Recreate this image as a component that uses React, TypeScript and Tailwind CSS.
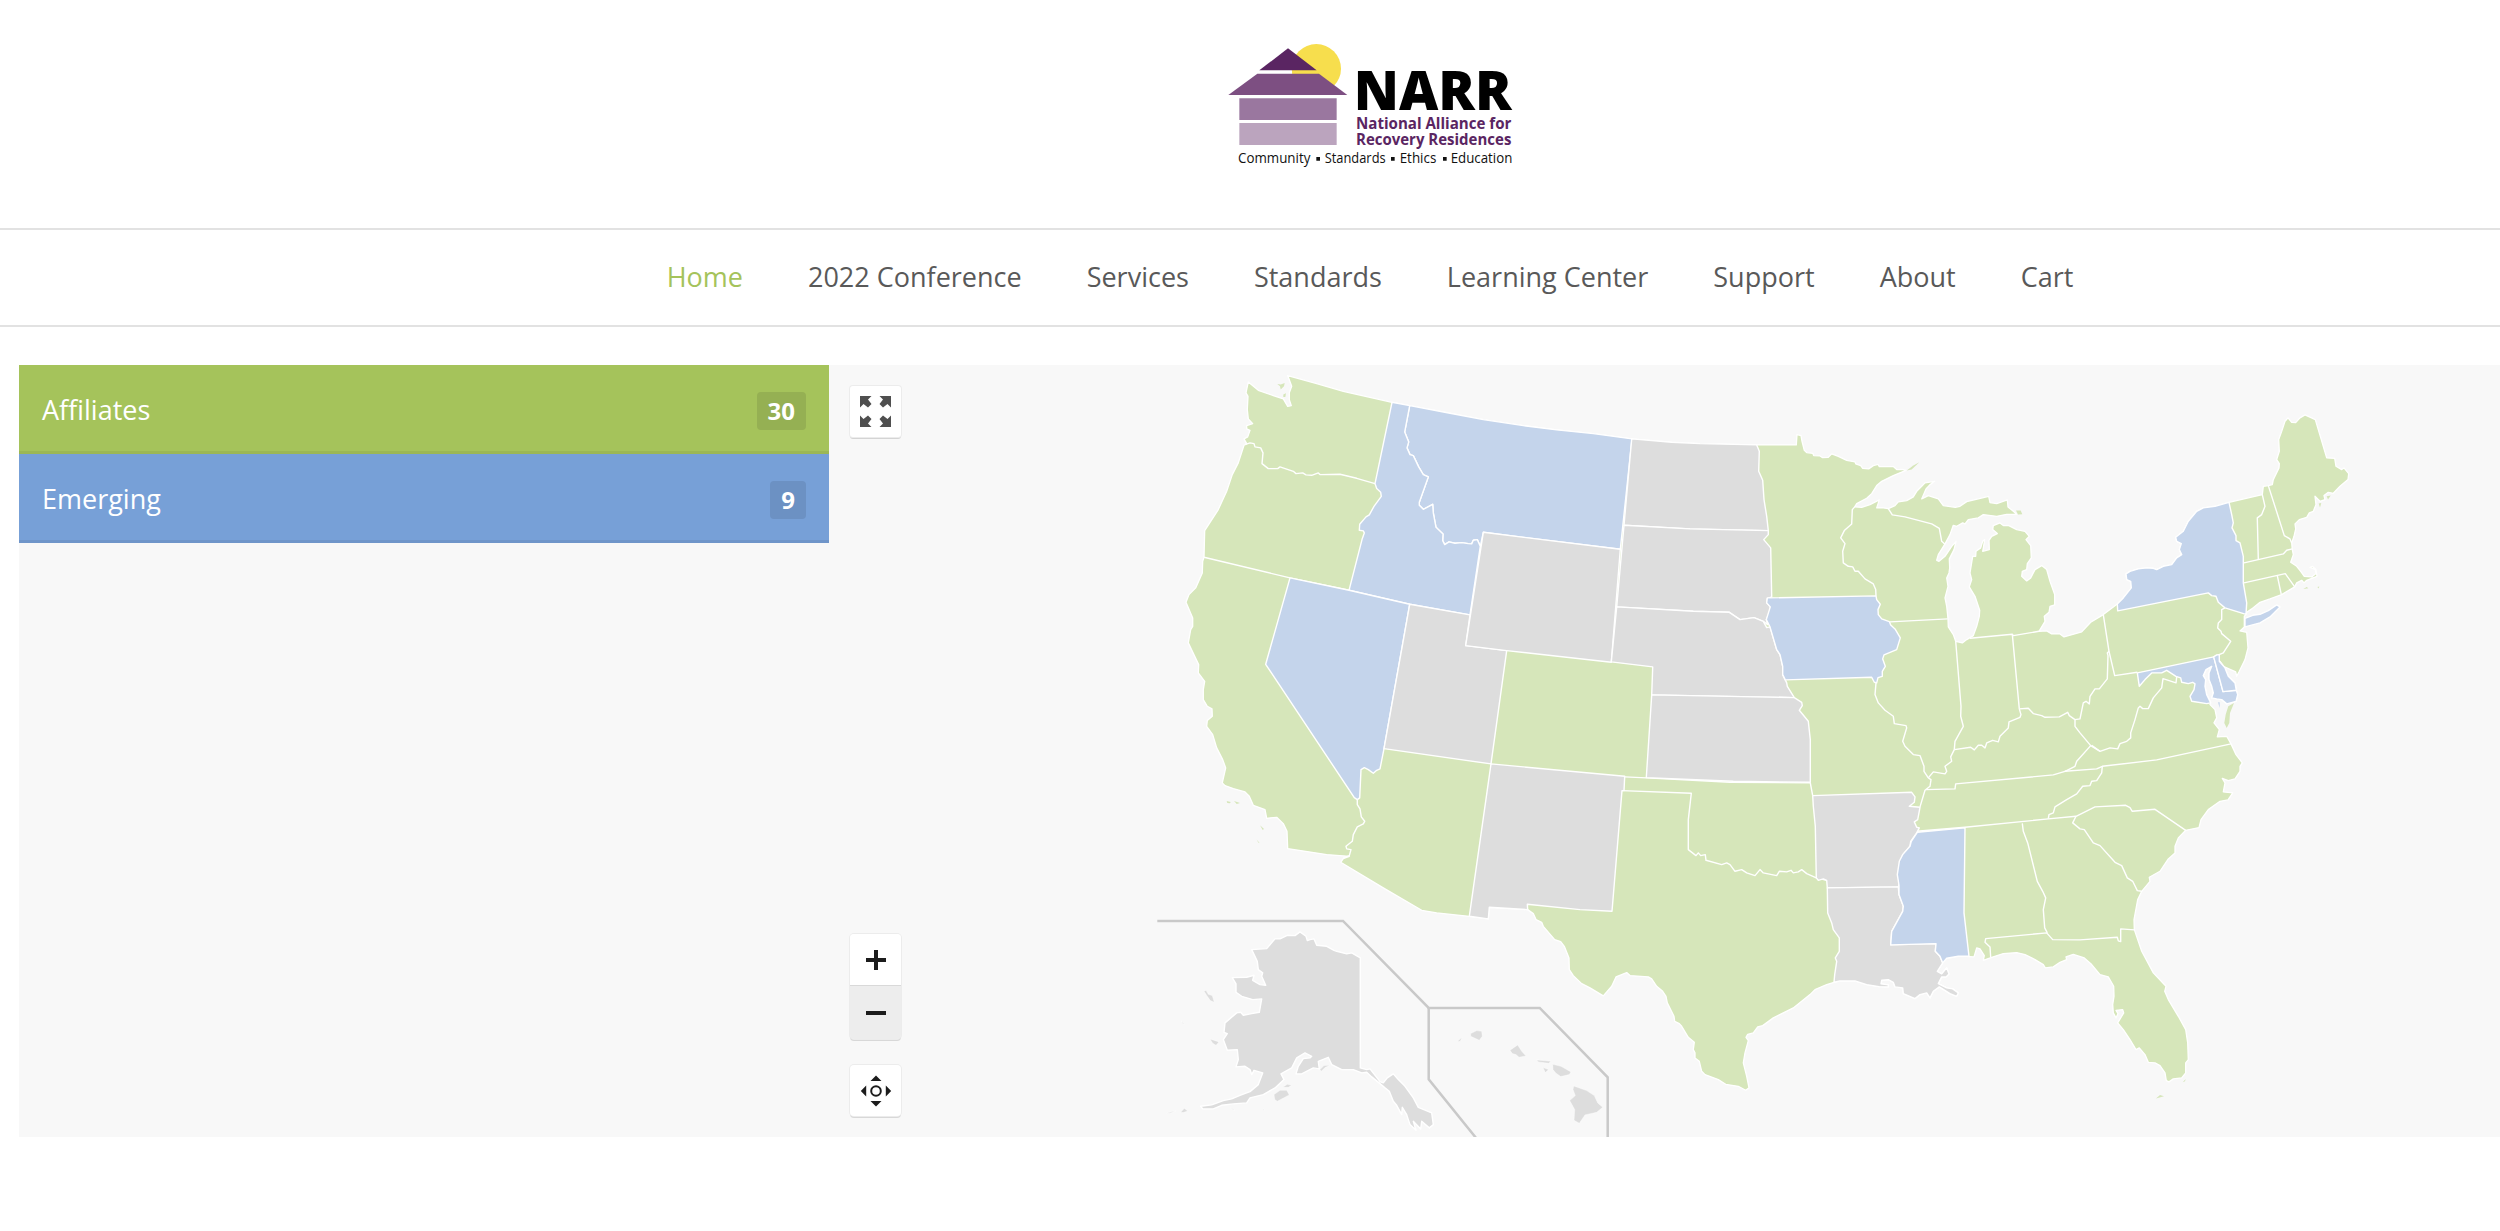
import React from "react";

const GREEN = "#d6e6ba";
const BLUE = "#c4d4eb";
const GRAY = "#dddddd";

/* Map sheets: each one has its own origin in map pixels and three units per pixel. */
const SHEETS = {
  nw: [1131, -5.4],
  mid: [1581, 54.6],
  lakes: [1801, 54.6],
  ne: [2041, 24.6],
  sw: [1131, 374.6],
  south: [1561, 374.6],
  se: [1881, 334.6],
} as const;
type Sheet = keyof typeof SHEETS;
type Run = [Sheet, string];

const place = (sheet: Sheet, pts: string) =>
  pts
    .trim()
    .split(/\s+/)
    .map((p) => {
      const [x, y] = p.split(",").map(Number);
      return `${(SHEETS[sheet][0] + x / 3).toFixed(1)},${(SHEETS[sheet][1] + y / 3).toFixed(1)}`;
    })
    .join(" ");

const join = (runs: Run[]) => runs.map(([s, p]) => place(s, p)).join(" ");

const NORTH_MT = "779,138 900,161 1000,180 1120,198 1220,211 1330,222 1446,238";
const ID_MT =
  "779,138 764,217 776,247 771,265 780,285 790,288 806,322 820,345 835,352 808,428 808,437 820,449 848,434 850,460 858,503 879,523 878,543 884,555 897,547 915,551 935,549 955,552 965,553 970,542 982,540 991,560";
const NY_COAST =
  "172,643 190,625 214,595 212,575 200,570 198,553 210,545 235,538 260,535 280,536 290,540 310,530 335,525 350,505 365,495 358,480 364,462 350,455 347,443 370,425 385,395 410,365 430,355 465,350 507,338";
const CHESAPEAKE =
  "533,915 528,935 500,943 485,930 470,928 455,925 460,910 455,890 447,870 447,850 455,830 438,840 430,858 437,870 435,890 440,915 452,940";
const LA_COAST =
  "1088,670 1072,695 1085,703 1100,685 1107,703 1098,712 1085,712 1075,732 1100,745 1118,748 1135,760 1130,770 1110,762 1078,742 1060,755 1050,775 1040,760 1020,765 1005,777 970,762 968,745 945,742 940,728 925,720 905,722 903,733 925,736 925,742 897,741 860,735 825,724 780,724 762,728";

const LOWER_48: Run[] = [
  ["nw", "726,128 " + NORTH_MT],
  [
    "mid",
    "95,58 215,68 300,72 470,76 589,76 591,45 603,48 606,65 613,92 620,99 638,101 641,108 660,109 667,114 685,113 695,103 715,110 740,122 765,127 767,133 782,138 788,146 806,148 820,138 834,134 838,141 880,141 890,150 908,149 918,152 880,168 845,185 830,198 815,222 800,236 770,252 764,262 785,263 810,255 838,241 830,265 850,265 865,267 885,258 895,247 920,243 940,232 950,215 965,200 975,190 1004,185 990,195 978,208 965,238 985,228 1015,238 1030,258 1066,263",
  ],
  [
    "lakes",
    "406,263 420,260 440,246 506,230 510,249 530,252 562,241 564,262 580,275 590,284 560,284 530,290 490,285 475,295 445,300 435,313 428,310 410,320 400,317 390,345 375,373 355,405 350,422 357,425 375,410 395,380 408,365 402,390 388,418 389,445 387,460 380,475 384,500 375,535 380,560 384,598 385,622 400,645 407,665 427,670 440,660 460,648 470,620 478,590 479,572 465,530 448,502 455,480 450,460 458,410 467,410 468,395 482,385 488,365 494,360 488,395 508,390 507,362 515,350 532,342 518,330 520,318 540,310 550,318 565,317 590,330 615,335 628,350 618,360 632,378 634,415 622,432 620,450 607,455 605,470 620,484 632,475 645,450 665,438 680,450 690,485 704,525 704,556 690,560 687,578 673,590 675,605 657,635 680,634 695,643 720,643 732,652 785,637 812,608 850,585 892,553",
  ],
  [
    "ne",
    NY_COAST +
      " 607,315 610,290 625,288 637,285 640,270 657,235 658,222 650,210 658,185 656,150 665,125 675,95 684,85 695,98 707,99 720,85 735,76 766,90 800,205 824,206 828,230 845,240 852,235 866,252 864,270 840,290 820,311 805,308 792,318 795,330 780,335 765,320 768,345 760,365 748,370 740,383 718,390 705,403 707,418 702,440 695,460 697,480 700,495 692,518 710,530 722,545 733,560 755,562 768,552 766,540 750,533 757,530 768,540 771,560 740,572 732,580 725,572 710,580 704,592 665,615 630,628 600,638 575,658 560,668 558,675 553,680 553,712 540,724 560,728 564,775 555,810 538,845 530,860 527,847 490,830 480,815 495,835 505,860 525,880 529,900 " +
      CHESAPEAKE +
      " 450,945 465,960 470,985 462,1000 478,1020 472,1042 500,1040",
  ],
  [
    "se",
    "993,133 1008,165 1027,190 1020,200 1020,215 1005,238 985,243 967,236 975,250 970,277 998,280 984,301 960,305 925,330 903,360 897,384 857,392 835,415 825,440 825,460 805,478 780,515 748,533 750,545 725,575 713,600 702,660 703,690 725,755 760,820 798,860 794,875 805,900 835,950 857,990 863,1030 865,1080 857,1090 857,1120 845,1135 820,1138 807,1147 799,1143 795,1120 780,1098 765,1090 745,1088 735,1065 718,1045 708,1050 690,1020 670,990 653,970 671,940 668,930 648,932 654,942 648,955 640,940 638,915 642,890 641,860 625,832 600,825 575,795 553,775 520,764 498,772 500,780 480,788 460,802 436,805 430,795 405,780 375,765 350,759 310,762 275,773 250,782 253,768 240,748 230,745 222,772 208,771 175,769 150,775 138,772",
  ],
  [
    "south",
    LA_COAST +
      " 740,735 705,750 690,765 640,805 580,835 548,858 533,862 520,880 503,884 498,893 505,903 495,940 490,970 500,1010 507,1045 497,1052 475,1040 437,1034 415,1020 375,1005 365,995 358,965 345,955 345,940 340,930 343,908 325,893 305,860 298,852 284,845 282,830 262,790 258,770 248,755 230,740 215,718 205,712 150,708 140,699 108,712 95,740 70,769",
  ],
  [
    "sw",
    "1320,745 1295,732 1270,708 1258,690 1257,655 1243,620 1232,606 1214,600 1180,560 1175,548 1158,540 1150,522 1133,510 1018,503 1015,538 958,530 860,520 815,512 700,445 572,368 580,357 598,350 530,345 413,327 411,275 400,252 380,233 350,236 345,210 310,197 298,170 285,157 250,147 225,138 217,130",
  ],
  [
    "nw",
    "227,1225 218,1200 200,1165 188,1125 170,1100 172,1083 187,1070 186,1048 172,1040 160,1020 160,990 164,965 145,940 146,915 115,850 122,810 128,800 128,775 108,728 117,705 137,685 157,640 158,605 162,593 164,513 205,450 230,395 247,345 265,310 282,257 290,252 282,238 293,232 300,212 290,208 290,198 308,192 295,178 292,150 294,110 288,100 295,67 325,92 370,108 400,118 413,140 424,138 418,120 418,100 425,80 413,48 500,72 580,95",
  ],
];

/* Small green pieces lying off the coast. */
const GREEN_ISLES: Run[] = [
  ["nw", "382,73 392,75 404,70 402,80 392,90 390,80"],
  ["nw", "400,105 408,101 406,112 400,112"],
  ["mid", "920,153 935,150 958,128 940,138"],
  ["lakes", "588,273 602,273 607,284 594,285"],
  ["ne", "522,940 505,950 497,975 493,1000 500,1015 508,1000 510,970"],
  ["ne", "730,598 740,592 745,596"],
  ["ne", "772,592 778,591 776,597"],
  ["ne", "776,342 784,340 780,354"],
  ["ne", "800,320 812,318 804,330"],
  ["sw", "230,184 242,187 240,191 232,190"],
  ["sw", "252,184 270,190 260,193"],
  ["sw", "330,257 342,268 338,271"],
  ["sw", "320,300 329,311 325,309"],
  ["se", "768,1197 780,1186 792,1190"],
  ["se", "848,1148 857,1138 855,1145"],
];

/* Borders between neighbouring green states. */
const BORDERS: Run[] = [
  ["nw", "285,255 300,250 312,252 315,262 332,265 339,280 336,312 355,327 383,327 390,322 430,335 438,342 458,340 468,346 485,347 505,340 510,345 570,344 620,356 675,372"],
  ["nw", "162,593 420,655 597,692"],
  ["sw", "622,180 622,195 630,208 634,232 644,245 640,253 622,262 610,285 607,305 588,320 590,328 603,330 598,348 580,355"],
  ["south", "134,112 199,115 450,128 691,130 698,168"],
  ["south", "126,153 334,161 325,240 325,330 348,348 355,340 362,348 376,345 378,362 425,375 440,370 450,375 465,395 485,390 500,400 525,408 540,390 550,400 590,408 598,395 620,397 633,392 640,400 655,397 665,390 680,402 709,415 740,422"],
  ["mid", "764,262 757,270 755,313 733,333 722,355 735,372 728,395 730,430 745,440 758,442 765,455 775,455 795,478 820,493 827,510 828,529"],
  ["mid", "865,267 877,286 915,292 995,313 1018,326 1025,365 1035,374"],
  ["mid", "870,607 1043,598"],
  ["lakes", "407,665 423,860 422,890 430,920 405,965 403,990"],
  ["mid", "828,790 825,825 835,850 855,872 880,890 883,912 918,918 920,925 908,965 915,980 940,1005 960,1008 972,1040 972,1055 985,1075"],
  ["mid", "985,1075 1000,1057 1035,1063 1040,1055 1035,1040 1055,1025 1052,1012 1063,990"],
  ["mid", "985,1075 993,1080 990,1100 975,1112 960,1162"],
  ["lakes", "403,990 452,983 463,991 475,977 485,977 495,985 500,970 518,962 535,967 540,950 565,925 567,907 600,893 603,885 598,868"],
  ["lakes", "598,868 625,866 640,882 665,888 675,893 718,892 743,878 748,888 765,900"],
  ["lakes", "765,900 780,898 790,850 798,845 808,853 810,830 825,808 838,808 862,778 864,708 862,700 867,695"],
  ["lakes", "850,585 867,695 884,768 952,758"],
  ["lakes", "450,656 577,644 580,648 657,635"],
  ["lakes", "577,644 598,868"],
  ["lakes", "765,900 765,920 780,940 812,978 840,995"],
  ["ne", "95,1067 120,1085 150,1075 173,1078 180,1062 200,1055 212,1045 212,1030 225,990 235,955 240,950 248,957 265,957 280,925 305,895 309,867 348,880 350,862"],
  ["lakes", "812,978 770,1025 765,1040 735,1055"],
  ["se", "78,270 165,268 167,253 460,226 495,215 590,208 607,200 770,181 993,133"],
  ["se", "607,200 605,220 590,243 575,245 570,258 548,260 530,283 500,300 465,322 460,340 447,345 445,357"],
  ["se", "50,395 195,383 445,358 528,350 585,322 677,317 690,324 697,335 765,329 857,392"],
  ["se", "528,350 518,370 540,388 553,390 580,430 600,438 645,488 665,498 682,535 698,545 712,573 725,575"],
  ["se", "367,371 370,395 383,430 412,545 428,575 437,595 430,630 434,685 442,700"],
  ["se", "272,773 270,742 255,728 257,717 440,700 458,720 540,721 652,713 655,724 662,726 662,688 703,691"],
  ["ne", "495,655 485,660 485,690 475,700 473,715 483,725 485,732 512,755 490,790 461,802"],
  ["ne", "607,315 615,350 605,375 592,385 595,510"],
  ["ne", "625,288 673,438 690,448 695,460"],
  ["ne", "552,520 670,493 680,482 697,478"],
  ["ne", "552,580 676,552 704,592"],
  ["ne", "652,558 664,615"],
];

const STATES: { id: string; fill: string; runs: Run[] }[] = [
  { id: "MT", fill: BLUE, runs: [["nw", NORTH_MT + " 1411,569 1000,518 " + ID_MT.split(" ").reverse().join(" ")]] },
  {
    id: "ID",
    fill: BLUE,
    runs: [["nw", "726,128 " + ID_MT + " 960,766 779,734 597,692 636,540 643,520 640,514 628,512 629,494 648,472 658,466 672,440 694,410 692,398 680,387 675,372"]],
  },
  { id: "NV", fill: BLUE, runs: [["nw", "420,655 597,692 779,734 702,1167 690,1228 680,1232 670,1241 655,1230 643,1224 633,1230 629,1315 622,1320 613,1314 347,914"]] },
  { id: "UT", fill: GRAY, runs: [["nw", "779,734 960,766 947,858 1070,873 1023,1213 702,1167"]] },
  { id: "WY", fill: GRAY, runs: [["nw", "1000,518 1411,569 1384,908 1070,873 947,858"]] },
  { id: "ND", fill: GRAY, runs: [["mid", "95,58 215,68 300,72 470,76 478,95 476,155 488,182 492,240 500,290 505,333 270,328 72,317"]] },
  {
    id: "SD",
    fill: GRAY,
    runs: [["mid", "72,317 270,328 505,333 505,345 491,360 512,385 515,532 502,537 500,550 511,562 508,580 499,600 503,615 490,605 462,594 420,600 388,578 280,575 50,562"]],
  },
  {
    id: "NE",
    fill: GRAY,
    runs: [["mid", "50,562 280,575 388,578 420,600 462,594 490,605 500,624 510,622 530,690 540,705 548,740 548,765 560,790 562,800 583,834 155,826 158,742 34,727"]],
  },
  { id: "KS", fill: GRAY, runs: [["mid", "155,826 583,834 605,848 607,858 598,872 625,905 631,960 631,1088 400,1085 139,1074"]] },
  { id: "NM", fill: GRAY, runs: [["sw", "1023,73 1424,110 1422,153 1416,153 1386,515 1290,510 1132,494 1133,510 1018,503 1015,538 958,530"]] },
  {
    id: "IA",
    fill: BLUE,
    runs: [["mid", "502,535 828,529 830,540 841,554 834,570 835,585 845,598 868,606 872,616 885,628 901,655 890,690 852,706 848,718 856,740 847,755 847,770 834,774 830,790 823,788 815,773 556,781 548,765 548,740 540,705 530,690 510,622 499,600 511,562 500,550"]],
  },
  {
    id: "AR",
    fill: GRAY,
    runs: [["south", "698,168 995,158 1005,172 1003,188 988,200 1020,203 1013,240 1003,247 1010,263 1018,265 1010,280 992,305 990,320 968,345 965,365 955,395 957,437 955,442 742,445 740,422 730,418 715,422 709,415 706,260 700,200"]],
  },
  {
    id: "LA",
    fill: GRAY,
    runs: [["south", "742,445 955,442 957,465 970,500 968,515 935,575 932,616 1068,612 1066,635 1080,650 " + LA_COAST + " 764,705 770,665 766,655 778,635 778,595 760,570 755,550 743,520"]],
  },
  {
    id: "MS",
    fill: BLUE,
    runs: [["south", "1012,278 1155,265 1152,520 1167,650 1135,650 1100,656 1088,670 1080,650 1066,635 1068,612 932,616 935,575 968,515 970,500 957,465 957,437 952,405 958,365 968,345 990,320 994,305"]],
  },
  { id: "NY", fill: BLUE, runs: [["ne", NY_COAST + " 515,375 520,400 516,415 528,438 528,453 540,460 550,500 550,580 560,640 558,674 495,655 475,638 468,620 455,618 445,610 173,664"]] },
  { id: "NY-LI", fill: BLUE, runs: [["ne", "555,686 578,677 600,674 625,663 650,646 660,652 630,682 600,700 555,712"]] },
  {
    id: "MD",
    fill: BLUE,
    runs: [["ne", "232,850 461,802 489,906 529,902 " + CHESAPEAKE + " 440,942 395,935 390,920 402,900 405,883 398,878 385,882 365,878 362,865 348,860 320,842 305,850 275,850 255,870 238,890"]],
  },
  { id: "DE", fill: BLUE, runs: [["ne", "461,802 470,796 478,795 478,815 495,835 505,860 525,880 529,902 489,906"]] },
  {
    id: "AK",
    fill: GRAY,
    runs: [["sw", "631,655 605,640 590,643 560,635 552,632 530,620 500,617 492,598 480,600 472,603 468,590 450,577 435,588 412,587 390,598 375,598 350,627 305,630 322,665 325,690 338,700 335,710 347,737 330,735 308,722 312,707 290,713 247,714 258,733 258,758 275,770 308,780 335,778 328,818 305,822 280,827 272,818 260,820 225,850 222,878 232,882 220,900 232,932 262,930 265,960 258,982 285,980 300,990 305,1005 312,992 338,1000 325,1035 300,1056 270,1067 245,1078 220,1083 185,1096 152,1100 158,1108 190,1108 215,1097 250,1093 290,1090 300,1075 340,1065 375,1045 402,1020 393,1003 425,985 440,955 465,940 485,950 480,955 460,957 445,980 438,1003 455,1003 490,985 508,988 505,965 535,953 545,975 575,990 610,990 635,1000 650,998 665,1012 690,1032 705,1045 718,1055 730,1085 740,1097 755,1125 757,1103 770,1125 775,1140 780,1155 798,1172 790,1145 812,1168 815,1145 838,1165 850,1155 845,1120 805,1103 790,1075 765,1040 745,1020 730,1003 712,1015 700,1030 690,1026 660,988 650,990 631,985"]],
  },
];

const GRAY_ISLES: string[] = [
  "162,755 168,752 175,764 187,768 193,788 181,783 172,770",
  "95,843 103,855 98,852",
  "180,898 207,907 198,917 188,911",
  "50,1121 78,1113 60,1121",
  "92,1118 103,1106 113,1114 100,1119",
  "372,1065 390,1052 410,1052 418,1066 382,1085 374,1080",
  "398,1043 412,1034 425,1037 415,1043",
  "240,1104 250,1108 253,1113",
  "338,1108 342,1108 341,1112",
  "510,990 522,978 540,977 525,984 514,995",
  "922,906 936,893 931,905",
  "962,882 980,873 995,875 997,890 988,902 962,890",
  "1080,932 1103,916 1115,935 1128,949 1107,953 1098,945 1087,942",
  "1160,961 1203,965 1196,971 1165,967",
  "1179,984 1196,990 1186,999",
  "1208,974 1233,980 1263,997 1258,1005 1232,1011 1217,1000 1209,990",
  "1271,1039 1310,1053 1333,1068 1343,1090 1358,1103 1340,1118 1305,1126 1288,1151 1272,1142 1274,1110 1259,1083 1276,1068 1269,1050",
];

const INSET_FRAMES = ["22,544 579,544 836,805 1169,805 1373,1013 1373,1195", "836,805 836,1019 978,1195"];

function UsMap() {
  return (
    <svg className="absolute inset-0" width="2481" height="772" viewBox="0 0 2481 772" strokeLinejoin="round">
      <g fill={GREEN} stroke="#ffffff" strokeWidth="1.3">
        <polygon points={join(LOWER_48)} />
      </g>
      <g fill={GREEN}>
        {GREEN_ISLES.map(([s, p]) => (
          <polygon key={p} points={place(s, p)} />
        ))}
      </g>
      <g fill="none" stroke="#ffffff" strokeWidth="1.4">
        {BORDERS.map(([s, p]) => (
          <polyline key={p} points={place(s, p)} />
        ))}
      </g>
      <g stroke="#ffffff" strokeWidth="1.4">
        {STATES.map((s) => (
          <polygon key={s.id} fill={s.fill} points={join(s.runs)} />
        ))}
      </g>
      <g fill={GRAY} stroke="#ffffff" strokeWidth="0.4">
        {GRAY_ISLES.map((p) => (
          <polygon key={p} points={place("sw", p)} />
        ))}
      </g>
      <polygon fill={BLUE} points={place("ne", "474,938 479,938 479,955")} />
      <g fill="none" stroke="#c9c9c9" strokeWidth="2.5" strokeLinejoin="miter">
        {INSET_FRAMES.map((p) => (
          <polyline key={p} points={place("sw", p)} />
        ))}
      </g>
    </svg>
  );
}

function Logo() {
  return (
    <svg width="320" height="150" viewBox="0 0 960 450">
      <circle cx="319" cy="116" r="74" fill="#f7de4d" />
      <path d="M140 122H246V130H140zM40 196H430V204H40z" fill="#ffffff" />
      <path d="M234 55L320 121H148z" fill="#5a2562" />
      <path d="M142 131H327L412 195H55z" fill="#7d4f82" />
      <path d="M88 205H380V270H88z" fill="#9a779f" />
      <path d="M88 279H380V345H88z" fill="#bba4be" />
      <g fontFamily="'Open Sans', 'Noto Sans', sans-serif">
        <text x="431" y="239" fontSize="162" fontWeight="800" textLength="474" lengthAdjust="spacingAndGlyphs" fill="#000000">
          NARR
        </text>
        <g fontWeight="700" fontSize="48" fill="#5a2562">
          <text x="438" y="298" textLength="466" lengthAdjust="spacingAndGlyphs">
            National Alliance for
          </text>
          <text x="438" y="345" textLength="466" lengthAdjust="spacingAndGlyphs">
            Recovery Residences
          </text>
        </g>
        <g fontSize="43" fontWeight="500" fill="#111111">
          <text x="84" y="398" textLength="217" lengthAdjust="spacingAndGlyphs">Community</text>
          <text x="344" y="398" textLength="183" lengthAdjust="spacingAndGlyphs">Standards</text>
          <text x="569" y="398" textLength="110" lengthAdjust="spacingAndGlyphs">Ethics</text>
          <text x="722" y="398" textLength="185" lengthAdjust="spacingAndGlyphs">Education</text>
        </g>
      </g>
      <path d="M319 381h11v11h-11zM543 381h11v11h-11zM699 381h11v11h-11z" fill="#111111" />
    </svg>
  );
}

const NAV = ["Home", "2022 Conference", "Services", "Standards", "Learning Center", "Support", "About", "Cart"];

const BTN = "flex items-center justify-center bg-white";

export default function App() {
  return (
    <div className="h-[1231px] w-[2500px] overflow-hidden bg-white font-['Open_Sans',sans-serif]">
      <header className="flex h-[228px] justify-center pt-[30px] pl-[240px]">
        <Logo />
      </header>
      <nav className="flex h-[99px] items-center justify-center gap-[65px] border-y-2 border-[#e2e2e2] pb-[2px] pl-[240px] text-[27px] leading-[38px] text-[#595959]">
        {NAV.map((item, i) => (
          <a key={item} className={i === 0 ? "whitespace-nowrap text-[#a5c35b]" : "whitespace-nowrap"}>
            {item}
          </a>
        ))}
      </nav>
      <main className="relative mt-[38px] ml-[19px] flex h-[772px] overflow-hidden bg-[#f8f8f8]">
        <UsMap />
        <aside className="relative w-[810px] text-[27px] leading-[38px] text-white">
          <div className="flex h-[89px] items-center justify-between border-b-[3px] border-[#9bb755] bg-[#a5c35b] px-[23px]">
            <span className="pt-[3px]">Affiliates</span>
            <span className="mt-[6px] flex h-[38px] items-center rounded-[4px] bg-[#95b053] px-[11px] text-2xl font-bold">30</span>
          </div>
          <div className="flex h-[89px] items-center justify-between border-b-[3px] border-[#6f95c9] bg-[#77a0d7] px-[23px]">
            <span className="pt-[3px]">Emerging</span>
            <span className="mt-[6px] flex h-[38px] items-center rounded-[4px] bg-[#6c91c3] px-[11px] text-2xl font-bold">9</span>
          </div>
        </aside>
        <div className="relative ml-[21px] flex w-[51px] flex-col pt-[21px]">
          <div className={BTN + " h-[51px] rounded-[3px] shadow-[0_0_0_1px_#ececec,0_2px_0_#d4d4d4]"}>
            <svg width="31" height="31" viewBox="0 0 31 31" fill="#4f4f4f">
              <path d="M0 0h11.500l-3.500 3.500 3.500 4.500-3.500 3.500-4.500-3.500L0 11.500z" />
              <path d="M31 0v11.500l-3.500-3.500-4.500 3.500-3.500-3.500 3.500-4.500L19.500 0z" />
              <path d="M0 31V19.500l3.500 3.500 4.500-3.500 3.500 3.500-3.500 4.500 3.500 3.500z" />
              <path d="M31 31H19.500l3.500-3.500-3.500-4.500 3.500-3.500 4.500 3.500 3.500-3.500z" />
            </svg>
          </div>
          <div className="mt-[497px] flex flex-col overflow-hidden rounded-[4px] shadow-[0_0_0_1px_#ececec,0_2px_0_#d8d8d8]">
            <div className={BTN + " h-[52px] border-b border-[#d9d9d9]"}>
              <svg width="20" height="20" viewBox="0 0 20 20" fill="#1c1c1c">
                <path d="M8 0h4v8h8v4h-8v8H8v-8H0V8h8z" />
              </svg>
            </div>
            <div className="flex h-[53px] items-center justify-center bg-[#ededed]">
              <svg width="20" height="4" viewBox="0 0 20 4" fill="#1c1c1c">
                <path d="M0 0h20v4H0z" />
              </svg>
            </div>
          </div>
          <div className={BTN + " mt-[26px] h-[51px] rounded-[4px] shadow-[0_0_0_1px_#ececec,0_2px_0_#d8d8d8]"}>
            <svg width="32" height="32" viewBox="0 0 32 32" fill="#1c1c1c">
              <circle cx="16" cy="16" r="4.8" fill="none" stroke="#1c1c1c" strokeWidth="2" />
              <path d="M16 0.5l5.5 5.5h-11zM16 31.5l5.5-5.5h-11zM0.8 16l5.4-5.5v11zM31.2 16l-5.4-5.5v11z" />
            </svg>
          </div>
        </div>
      </main>
    </div>
  );
}
